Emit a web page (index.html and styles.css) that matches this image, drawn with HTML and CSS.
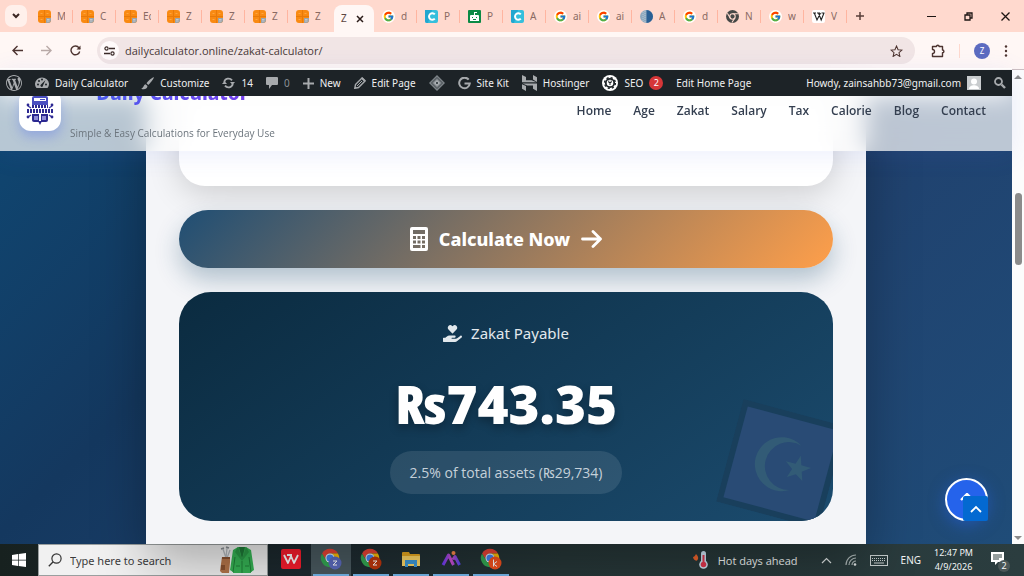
FILE: index.html
```html
<!DOCTYPE html>
<html lang="en">
<head>
    <meta charset="UTF-8">
    <meta name="viewport" content="width=device-width, initial-scale=1.0">
    <title>Zakat Calculator</title>
    <link rel="stylesheet" href="styles.css">
</head>
<body>
    <!-- shared icons -->
    <svg class="sprite" aria-hidden="true">
        <symbol id="i-calc" viewBox="0 0 13 13">
            <rect width="13" height="13" rx="3" fill="#f98a12"/>
            <path d="M8 8h5v2a3 3 0 0 1-3 3H8z" fill="#9ba3ab"/>
            <path d="M6.500 0v13M0 6.500h13" stroke="#e87a0a" stroke-width="1"/>
            <path d="M2.500 3.500h2M8.500 3.500h2M2.500 9.500h2" stroke="#ffa53f" stroke-width="1"/>
            <path d="M9 9.500h2.500M9 11h2.500" stroke="#c3c9ce" stroke-width="1"/>
        </symbol>
        <symbol id="i-google" viewBox="0 0 48 48">
            <circle cx="24" cy="24" r="24" fill="#fff"/>
            <g transform="translate(3 3) scale(.88)">
                <path fill="#FFC107" d="M43.611 20.083H42V20H24v8h11.303c-1.649 4.657-6.080 8-11.303 8-6.627 0-12-5.373-12-12s5.373-12 12-12c3.059 0 5.842 1.154 7.961 3.039l5.657-5.657C34.046 6.053 29.268 4 24 4 12.955 4 4 12.955 4 24s8.955 20 20 20 20-8.955 20-20c0-1.341-.138-2.650-.389-3.917z"/>
                <path fill="#FF3D00" d="M6.306 14.691l6.571 4.819C14.655 15.108 18.961 12 24 12c3.059 0 5.842 1.154 7.961 3.039l5.657-5.657C34.046 6.053 29.268 4 24 4 16.318 4 9.656 8.337 6.306 14.691z"/>
                <path fill="#4CAF50" d="M24 44c5.166 0 9.860-1.977 13.409-5.192l-6.190-5.238C29.211 35.091 26.715 36 24 36c-5.202 0-9.619-3.317-11.283-7.946l-6.522 5.025C9.505 39.556 16.227 44 24 44z"/>
                <path fill="#1976D2" d="M43.611 20.083H42V20H24v8h11.303c-.792 2.237-2.231 4.166-4.087 5.571l6.190 5.238C36.971 39.205 44 34 44 24c0-1.341-.138-2.650-.389-3.917z"/>
            </g>
        </symbol>
        <symbol id="i-cyan" viewBox="0 0 13 13">
            <rect width="13" height="13" rx="2" fill="#35bfdc"/>
            <path d="M0 0l7 0-4 13H2a2 2 0 0 1-2-2z" fill="#22a7d0"/>
            <path d="M9.800 4.300A3.300 3.300 0 1 0 9.800 8.700" fill="none" stroke="#fff" stroke-width="2"/>
        </symbol>
        <symbol id="i-chrome" viewBox="0 0 24 24">
            <path fill="#ea4335" d="M2.470 6.500A11 11 0 0 1 21.530 6.500L12 6.500A5.500 5.500 0 0 0 7.240 14.750Z"/>
            <path fill="#fbbc05" d="M21.530 6.500A11 11 0 0 1 12 23L16.760 14.750A5.500 5.500 0 0 0 12 6.500Z"/>
            <path fill="#34a853" d="M12 23A11 11 0 0 1 2.470 6.500L7.240 14.750A5.500 5.500 0 0 0 16.760 14.750Z"/>
            <circle cx="12" cy="12" r="5.500" fill="#fff"/>
            <circle cx="12" cy="12" r="4.300" fill="#4285f4"/>
        </symbol>
    </svg>

    <div class="tab-strip">
        <button class="tab-menu" aria-label="Search tabs"><svg width="8" height="6" viewBox="0 0 8 6"><path d="M1 1l3 3 3-3" fill="none" stroke="#3b2622" stroke-width="2"/></svg></button>
        <div class="tabs">
            <button class="tab"><svg class="favicon"><use href="#i-calc"/></svg><span>M</span></button>
            <button class="tab"><svg class="favicon"><use href="#i-calc"/></svg><span>C</span></button>
            <button class="tab"><svg class="favicon"><use href="#i-calc"/></svg><span>Ec</span></button>
            <button class="tab"><svg class="favicon"><use href="#i-calc"/></svg><span>Z</span></button>
            <button class="tab"><svg class="favicon"><use href="#i-calc"/></svg><span>Z</span></button>
            <button class="tab"><svg class="favicon"><use href="#i-calc"/></svg><span>Z</span></button>
            <button class="tab last"><svg class="favicon"><use href="#i-calc"/></svg><span>Z</span></button>
            <button class="tab active"><span>Z</span><svg width="8" height="8" viewBox="0 0 8 8"><path d="M1 1l6 6M7 1l-6 6" stroke="#2a1c19" stroke-width="1.500"/></svg></button>
            <button class="tab"><svg class="favicon"><use href="#i-google"/></svg><span>d</span></button>
            <button class="tab"><svg class="favicon"><use href="#i-cyan"/></svg><span>P</span></button>
            <button class="tab"><svg class="favicon" viewBox="0 0 13 13"><rect width="13" height="13" rx="1" fill="#0b8a45"/><path d="M3 5h7a1 1 0 0 1 1 1v5H2V6a1 1 0 0 1 1-1zM6 2h3v1H7v2H6z" fill="#fff"/><path d="M4 7h1v1H4zM8 7h1v1H8zM5 9h3v1H5z" fill="#0b8a45"/></svg><span>P</span></button>
            <button class="tab"><svg class="favicon"><use href="#i-cyan"/></svg><span>A</span></button>
            <button class="tab"><svg class="favicon"><use href="#i-google"/></svg><span>ai</span></button>
            <button class="tab"><svg class="favicon"><use href="#i-google"/></svg><span>ai</span></button>
            <button class="tab"><svg class="favicon" viewBox="0 0 13 13"><circle cx="6.500" cy="6.500" r="6.500" fill="#8fa9bf"/><path d="M6.500 0a6.500 6.500 0 0 1 0 13z" fill="#2a5f94"/><path d="M3 2v9M5 1v11" stroke="#b7c6d3" stroke-dasharray="1 1"/></svg><span>A</span></button>
            <button class="tab"><svg class="favicon"><use href="#i-google"/></svg><span>d</span></button>
            <button class="tab"><svg class="favicon" viewBox="0 0 24 24"><circle cx="12" cy="12" r="12" fill="#454746"/><circle cx="12" cy="12" r="5" fill="none" stroke="#ffd9ce" stroke-width="2"/><path d="M12 7h10M7.700 14.500L2.500 6M16.300 14.500L11 23" stroke="#ffd9ce" stroke-width="2"/></svg><span>N</span></button>
            <button class="tab"><svg class="favicon"><use href="#i-google"/></svg><span>w</span></button>
            <button class="tab"><svg class="favicon" viewBox="0 0 13 13"><rect width="13" height="13" rx="2" fill="#fff"/><path d="M1 3h3M5 3h3M9.500 3h3M2.300 3L5 10l3.500-7M6.500 3l2.700 7L12 3" fill="none" stroke="#222" stroke-width="1.100"/></svg><span>V</span></button>
        </div>
        <button class="new-tab" aria-label="New tab"><svg width="10" height="10" viewBox="0 0 10 10"><path d="M5 1v8M1 5h8" stroke="#5a3f3a" stroke-width="1.500"/></svg></button>
        <div class="window-controls">
            <button aria-label="Minimize"><svg width="9" height="9" viewBox="0 0 9 9"><path d="M0 4.500h9" stroke="#1d1513" stroke-width="1"/></svg></button>
            <button aria-label="Restore"><svg width="9" height="9" viewBox="0 0 9 9"><path d="M1 3h5v5H1zM3 3V1h5v5H6" fill="none" stroke="#1d1513" stroke-width="1.300"/></svg></button>
            <button aria-label="Close"><svg width="9" height="9" viewBox="0 0 9 9"><path d="M.5.5l8 8M8.500.5l-8 8" stroke="#1d1513" stroke-width="1.300"/></svg></button>
        </div>
    </div>

    <div class="toolbar">
        <div class="history">
            <button aria-label="Back"><svg width="11" height="11" viewBox="0 0 11 11"><path d="M11 5.500H1.500M5.500 1L1 5.500 5.500 10" fill="none" stroke="#4d3430" stroke-width="1.400"/></svg></button>
            <button aria-label="Forward"><svg width="11" height="11" viewBox="0 0 11 11"><path d="M0 5.500h9.500M5.500 1L10 5.500 5.500 10" fill="none" stroke="#b9aaa7" stroke-width="1.400"/></svg></button>
            <button aria-label="Reload"><svg width="11" height="11" viewBox="0 0 11 11"><path d="M9.700 6.500A4.400 4.400 0 1 1 9 2.800L10 4" fill="none" stroke="#4d3430" stroke-width="1.400"/><path d="M10.500.5v4h-4z" fill="#4d3430"/></svg></button>
        </div>
        <div class="omnibox">
            <button class="site-info" aria-label="Site information"><svg width="11" height="10" viewBox="0 0 11 10"><path d="M5 2.500h6M0 7.500h6" stroke="#3b2b28" stroke-width="1.300"/><circle cx="2.500" cy="2.500" r="1.600" fill="none" stroke="#3b2b28" stroke-width="1.200"/><circle cx="8.500" cy="7.500" r="1.600" fill="none" stroke="#3b2b28" stroke-width="1.200"/></svg></button>
            <input class="url" type="text" aria-label="Address" value="dailycalculator.online/zakat-calculator/">
            <button aria-label="Bookmark"><svg width="13" height="12" viewBox="0 0 24 23"><path d="M12 2l3 7 7.500.7-5.700 5 1.700 7.300L12 18l-6.500 4 1.700-7.300-5.700-5L9 9z" fill="none" stroke="#4d3430" stroke-width="2"/></svg></button>
        </div>
        <button aria-label="Extensions"><svg width="14" height="14" viewBox="0 0 14 14"><path d="M1.500 2.500H5.500a1.300 1.300 0 0 1 2.600 0H11.500v3.500a1.400 1.400 0 0 1 0 2.800V12.500h-10V9.500a2 2 0 0 0 0-4z" fill="none" stroke="#4d3430" stroke-width="1.400" stroke-linejoin="round"/></svg></button>
        <span class="divider"></span>
        <button class="profile" aria-label="Profile">Z</button>
        <button aria-label="Menu"><svg width="4" height="12" viewBox="0 0 4 12"><g fill="#4d3430"><circle cx="2" cy="1.500" r="1.200"/><circle cx="2" cy="6" r="1.200"/><circle cx="2" cy="10.500" r="1.200"/></g></svg></button>
    </div>

    <div class="viewport">
        <div class="page">
            <nav class="admin-bar" aria-label="Admin">
                <a href="#" aria-label="WordPress"><svg width="16" height="16" viewBox="0 0 20 20"><path d="M20 10c0-5.510-4.490-10-10-10C4.480 0 0 4.490 0 10c0 5.520 4.480 10 10 10 5.510 0 10-4.480 10-10zM7.780 15.370L4.370 6.220c.55-.02 1.170-.08 1.170-.08.5-.06.44-1.130-.06-1.110 0 0-1.450.11-2.370.11-.18 0-.37 0-.58-.01C4.120 2.690 6.870 1.110 10 1.110c2.330 0 4.450.87 6.050 2.340-.68-.11-1.650.39-1.650 1.580 0 .74.45 1.360.9 2.100.35.61.55 1.360.55 2.460 0 1.490-1.400 5-1.400 5l-3.030-8.370c.54-.02.82-.17.82-.17.5-.05.44-1.250-.06-1.220 0 0-1.440.12-2.380.12-.87 0-2.330-.12-2.330-.12-.5-.03-.56 1.200-.06 1.220l.92.08 1.260 3.410zM17.410 10c.24-.64.74-1.870.43-4.250.7 1.290 1.050 2.710 1.050 4.250 0 3.290-1.730 6.240-4.400 7.780.97-2.590 1.940-5.200 2.920-7.780zM6.100 18.090C3.120 16.650 1.110 13.530 1.110 10c0-1.300.23-2.480.72-3.590C3.250 10.300 4.670 14.200 6.100 18.090zm4.030-6.630l2.580 6.980c-.86.29-1.760.45-2.710.45-.79 0-1.570-.11-2.290-.33.81-2.380 1.620-4.740 2.420-7.100z"/></svg></a>
                <a href="#"><svg width="14" height="12" viewBox="0 0 14 12"><path d="M1.500 11A7 6.500 0 1 1 12.500 11z"/><g fill="#1d2327"><circle cx="3" cy="7.500" r="1"/><circle cx="4" cy="4" r="1"/><circle cx="7" cy="2.500" r="1"/><circle cx="11" cy="7.500" r="1"/><path d="M10.500 3L8 8.500A1.300 1.300 0 1 1 6 7.500z"/></g></svg>Daily Calculator</a>
                <a href="#"><svg width="13" height="13" viewBox="0 0 13 13"><path d="M12.800.3c-.8-.7-6 4-7.300 6l1.800 1.700C9 6.500 13.500 1 12.800.3zM4.600 7.200c-1.800.2-1.600 3-4.400 4.500 2.500 1.200 6 .7 6.300-2.700z"/></svg>Customize</a>
                <a href="#"><svg width="13" height="12" viewBox="0 0 13 12"><path d="M2.200 5A4.400 4.400 0 0 1 10 3.400M10.800 7A4.400 4.400 0 0 1 3 8.600" fill="none" stroke="#a7aaad" stroke-width="1.800"/><path d="M8 5h5l-2.500 3zM0 7h5L2.500 4z"/></svg>14</a>
                <a href="#" class="muted"><svg width="12" height="12" viewBox="0 0 12 12"><path d="M1 0h10a1 1 0 0 1 1 1v6a1 1 0 0 1-1 1H6l-3 4V8H1a1 1 0 0 1-1-1V1a1 1 0 0 1 1-1z"/></svg>0</a>
                <a href="#"><svg width="11" height="11" viewBox="0 0 11 11"><path d="M4.500 0h2v4.500H11v2H6.500V11h-2V6.500H0v-2h4.500z"/></svg>New</a>
                <a href="#"><svg width="12" height="12" viewBox="0 0 12 12"><path d="M1.500 7.500L8 1l3 3-6.500 6.500L.8 11.300z" fill="none" stroke="#a7aaad" stroke-width="1.400"/><path d="M7 1.500L8.500.2l3.300 3.300L10.500 5z"/><path d="M3 9l5-5" stroke="#a7aaad"/></svg>Edit Page</a>
                <a href="#" aria-label="Plugins"><svg width="16" height="16" viewBox="0 0 16 16"><path d="M8 0l8 8-8 8-8-8z" fill="#7d8388"/><path d="M8 2.500l5.500 5.500L8 13.500 2.500 8z" fill="none" stroke="#40474c" stroke-width="1"/><path d="M8 5l3 3-3 3-3-3z" fill="#b3b8bb"/><circle cx="8" cy="8" r="1.200" fill="#40474c"/></svg></a>
                <a href="#"><svg width="13" height="13" viewBox="0 0 13 13"><path d="M10.700 2.700A5.300 5.300 0 1 0 11.800 6.500H6.500" fill="none" stroke="#a7aaad" stroke-width="2"/></svg>Site Kit</a>
                <a href="#"><svg width="15" height="16" viewBox="0 0 15 16"><path d="M0 7.300V0l4 2.100v3.200h5.600l5 2zM11 4.600V0l4 2.200v4.900zM11 13.800v-3.200H5.200L.5 8.500H15V16zM0 9.300l4 1.800V16l-4-2.200z"/></svg>Hostinger</a>
                <a href="#"><svg width="16" height="16" viewBox="0 0 16 16"><circle cx="8" cy="8" r="8" fill="#fff"/><circle cx="8" cy="8" r="4.200" fill="#fff" stroke="#1d2327" stroke-width="1.800"/><circle cx="8" cy="8" r="5.400" fill="none" stroke="#1d2327" stroke-width="1.400" stroke-dasharray="2.120 2.120"/><path d="M6.800 5.500v2h2.400v-2M8 7.500V10" fill="none" stroke="#1d2327" stroke-width="1"/></svg>SEO<span class="count">2</span></a>
                <a href="#">Edit Home Page</a>
                <a href="#" class="account">Howdy, zainsahbb73@gmail.com<svg width="14" height="14" viewBox="0 0 14 14"><rect width="14" height="14" fill="#c9ccce"/><circle cx="7" cy="5.500" r="3" fill="#fff"/><path d="M2 13c0-5 10-5 10 0z" fill="#fff"/></svg></a>
                <a href="#" aria-label="Search"><svg width="12" height="12" viewBox="0 0 12 12"><circle cx="4.500" cy="4.500" r="3.500" fill="none" stroke="#a7aaad" stroke-width="1.800"/><path d="M7.500 7.500l3.500 3.500" stroke="#a7aaad" stroke-width="2.400"/></svg></a>
            </nav>

            <div class="site">
                <header class="site-header">
                    <div class="brand">
                        <span class="logo"><svg width="28" height="30" viewBox="0 0 28 30">
                            <path d="M6 3a2 2 0 0 1 2-2h12a2 2 0 0 1 2 2v7H6z" fill="#4a4fc0"/>
                            <path d="M8 3h12v3H8z" fill="#fff"/>
                            <path d="M14 4.500h5" stroke="#4a4fc0"/>
                            <path d="M6 11.500h16" stroke="#2c2891" stroke-width="3" stroke-dasharray="2 1"/>
                            <path d="M1 16h26" stroke="#2c2891" stroke-width="4" stroke-dasharray="2 1"/>
                            <path d="M6 19h16v6a2 2 0 0 1-2 2H8a2 2 0 0 1-2-2z" fill="#2c2891"/>
                            <path d="M8 21h4v4H8zM16 21h4v4h-4z" fill="#8f8cd6"/>
                            <path d="M13 19h2v9h-2z" fill="#fff"/>
                            <path d="M2 11l3 2M26 11l-3 2M2 22l3-2M26 22l-3-2" stroke="#3b35a5" stroke-width="1.400"/>
                            <g fill="#2c2891"><circle cx="2" cy="10" r="1.400"/><circle cx="26" cy="10" r="1.400"/><circle cx="2" cy="22" r="1.400"/><circle cx="26" cy="22" r="1.400"/><path d="M12 26h4l-2 4z"/></g>
                        </svg></span>
                        <div class="brand-text">
                            <div class="brand-name">Daily Calculator</div>
                            <div class="tagline">Simple &amp; Easy Calculations for Everyday Use</div>
                        </div>
                    </div>
                    <nav class="site-nav">
                        <a href="#">Home</a>
                        <a href="#">Age</a>
                        <a href="#">Zakat</a>
                        <a href="#">Salary</a>
                        <a href="#">Tax</a>
                        <a href="#">Calorie</a>
                        <a href="#">Blog</a>
                        <a href="#">Contact</a>
                    </nav>
                </header>

                <main class="container">
                    <section class="form-card"></section>

                    <button class="calculate-btn">
                        <svg width="18" height="24" viewBox="0 0 18 24"><path fill="#fff" fill-rule="evenodd" d="M2 0h14a2 2 0 0 1 2 2v20a2 2 0 0 1-2 2H2a2 2 0 0 1-2-2V2a2 2 0 0 1 2-2zM3 3v4h12V3zM3 9v3h3V9zM7.500 9v3h3V9zM12 9v3h3V9zM3 13.500v3h3v-3zM7.500 13.500v3h3v-3zM12 13.500v3h3v-3zM3 18v3h7.500v-3zM12 18v3h3v-3z"/></svg>
                        Calculate Now
                        <svg width="21" height="18" viewBox="0 0 21 18"><path d="M1.500 9h18M12 1.500L19.500 9 12 16.500" fill="none" stroke="#fff" stroke-width="2.800" stroke-linecap="round" stroke-linejoin="round"/></svg>
                    </button>

                    <section class="result-card">
                        <div class="result-label">
                            <svg width="19" height="17" viewBox="0 0 576 512"><path fill="currentColor" d="M275.300 250.500c7 7.400 18.400 7.400 25.500 0l108.900-114.200c31.600-33.200 29.800-88.200-5.600-118.800-30.800-26.700-76.700-21.900-104.900 7.700L288 36.900l-11.100-11.600C248.700-4.400 202.800-9.200 172 17.500c-35.300 30.600-37.200 85.600-5.600 118.800l108.900 114.200zm290 77.600c-11.800-10.700-30.200-10-42.600 0L430.300 402c-11.300 9.100-25.400 14-40 14H272c-8.800 0-16-7.200-16-16s7.200-16 16-16h78.300c15.900 0 30.700-10.900 33.300-26.600 3.300-20-12.100-37.400-31.600-37.400H192c-27 0-53.100 9.300-74.100 26.300L71.400 384H16c-8.800 0-16 7.200-16 16v96c0 8.800 7.200 16 16 16h356.800c14.500 0 28.600-4.900 40-14L564 377c15.200-12.100 16.400-35.300 1.300-48.900z"/></svg>
                            Zakat Payable
                        </div>
                        <div class="result-amount">₨743.35</div>
                        <div class="result-note">2.5% of total assets (₨29,734)</div>
                        <svg class="emblem" width="106" height="106" viewBox="-53 -53 106 106">
                            <rect x="-53" y="-53" width="106" height="106" fill="#193f5c"/>
                            <rect x="-47" y="-47" width="94" height="94" fill="#294b75"/>
                            <path d="M15-23A27 27 0 1 0 15 23A24 24 0 1 1 15-23z" fill="#325b76"/>
                            <path d="M17-13l3 9h10l-8 6 3 9-8-5-8 5 3-9-8-6h10z" fill="#325b76"/>
                        </svg>
                    </section>
                </main>

                <button class="back-top" aria-label="Back to top"><svg width="14" height="14" viewBox="0 0 14 14"><path d="M7 1v13M1 7l6-6 6 6" fill="none" stroke="#fff" stroke-width="2.400"/></svg></button>
                <button class="scroll-up" aria-label="Scroll up"><svg width="12" height="8" viewBox="0 0 12 8"><path d="M1 7l5-5 5 5" fill="none" stroke="#fff" stroke-width="1.800"/></svg></button>
            </div>
        </div>
        <div class="scrollbar">
            <span class="arrow up"></span>
            <span class="thumb"></span>
            <span class="arrow down"></span>
        </div>
    </div>

    <footer class="taskbar">
        <button class="start" aria-label="Start"><svg width="14" height="14" viewBox="0 0 14 14"><path d="M0 2l6-1v5.700H0zM6.700.9L14 0v6.700H6.700zM0 7.400h6V13l-6-1zM6.700 7.400H14V14l-7.300-1z" fill="#fff"/></svg></button>
        <label class="search">
            <svg width="14" height="14" viewBox="0 0 14 14"><circle cx="8.500" cy="5.500" r="4.600" fill="none" stroke="#333" stroke-width="1.200"/><path d="M5.200 8.800L.8 13.200" stroke="#333" stroke-width="1.300"/></svg>
            <input type="text" placeholder="Type here to search" aria-label="Search">
            <svg width="36" height="28" viewBox="0 0 36 28">
                <path d="M4 3l3 9M8 2l-1 10M11 4L8 12" stroke="#b4b9be" stroke-width="1.300"/>
                <path d="M2 3l3-1M7 1l3 1" stroke="#8a8f94" stroke-width="1.600"/>
                <path d="M3 11h8v5l-1 11H3L1 25z" fill="#b5754a"/><path d="M3 11h8v2H3zM2 19h4v5H2z" fill="#8a5230"/>
                <path d="M19 1h8l5 3 3 20-3 2v1H14v-1l-3-2 3-20z" fill="#36b455"/>
                <path d="M20 1h6l-3 12z" fill="#1f7a38"/>
                <path d="M19 1l-3 5 7 9 7-9-3-5-4 12z" fill="#2b9a47"/>
                <path d="M23 15v12M16 11l-2 15M30 11l2 15" stroke="#1f8038"/>
                <path d="M17 20h4M26 20h4" stroke="#1f8038"/>
            </svg>
        </label>
        <div class="apps">
            <button aria-label="WPS Office"><svg width="20" height="20" viewBox="0 0 20 20"><rect width="20" height="20" rx="2" fill="#fb1d2d"/><path d="M3 6l4 8 3-7 3 7 4-8M6 6h5" fill="none" stroke="#fff" stroke-width="1.800" stroke-linejoin="round"/></svg></button>
            <button class="open current" aria-label="Chrome"><svg width="22" height="22" viewBox="0 0 22 22"><use href="#i-chrome" width="20" height="20"/><circle cx="15" cy="15" r="6.500" fill="#5c6bc0"/><path d="M13 13h4l-4 4h4" fill="none" stroke="#fff"/></svg></button>
            <button class="open" aria-label="Chrome"><svg width="22" height="22" viewBox="0 0 22 22"><use href="#i-chrome" width="20" height="20"/><circle cx="15" cy="15" r="6.500" fill="#bf360c"/><path d="M13 13h4l-4 4h4" fill="none" stroke="#fff"/></svg></button>
            <button class="open" aria-label="File Explorer"><svg width="18" height="15" viewBox="0 0 18 15"><path d="M1 0h6l1 2h9a1 1 0 0 1 1 1v11H0V1a1 1 0 0 1 1-1z" fill="#e8a820"/><path d="M0 4h18v10H0z" fill="#ffd766"/><path d="M3 8h12v7h-3v-3H6v3H3z" fill="#3f9ad9"/></svg></button>
            <button class="open" aria-label="Editor"><svg width="20" height="16" viewBox="0 0 20 16"><defs><linearGradient id="peak" x2="1" y2="0"><stop offset="0" stop-color="#6a3df5"/><stop offset=".5" stop-color="#d24fd0"/><stop offset="1" stop-color="#5a48f0"/></linearGradient></defs><path d="M2 14L7.500 4l5 10M12 8.500l2-3 4.500 8.500" fill="none" stroke="url(#peak)" stroke-width="3" stroke-linejoin="round"/><circle cx="12.500" cy="2" r="2" fill="#ff8a4c"/></svg></button>
            <button class="open" aria-label="Chrome"><svg width="22" height="22" viewBox="0 0 22 22"><use href="#i-chrome" width="20" height="20"/><circle cx="15" cy="15" r="6.500" fill="#f4511e"/><path d="M13.500 11.500v7M17 13.500l-3.500 2.500 3.500 2.500" fill="none" stroke="#fff"/></svg></button>
        </div>
        <div class="tray">
            <button class="weather"><svg width="16" height="20" viewBox="0 0 16 20"><path d="M3 4c2 2 3 4 1.500 6S0 9 0 7c1 0 2-1 3-3z" fill="#f0642d"/><rect x="8" y="1" width="5" height="13" rx="2.500" fill="#cfe3f3"/><circle cx="10.500" cy="14.500" r="4.300" fill="#cfe3f3"/><circle cx="10.500" cy="14.500" r="2.800" fill="#e0364f"/><path d="M10.500 5v9" stroke="#e0364f" stroke-width="2"/></svg>Hot days ahead</button>
            <button aria-label="Hidden icons"><svg width="11" height="7" viewBox="0 0 11 7"><path d="M1 6l4.500-4.500L10 6" fill="none" stroke="#dfe4e4" stroke-width="1.200"/></svg></button>
            <button aria-label="Network"><svg width="12" height="12" viewBox="0 0 12 12"><path d="M1 11A10 10 0 0 1 11 1M4 11a7 7 0 0 1 7-7M7 11a4 4 0 0 1 4-4" fill="none" stroke="#aab4b4" stroke-width="1.200"/><circle cx="10" cy="10.500" r="1.300" fill="#dfe4e4"/></svg></button>
            <button aria-label="Keyboard"><svg width="18" height="11" viewBox="0 0 18 11"><rect x=".5" y=".5" width="17" height="10" fill="none" stroke="#c5cccc"/><path d="M2 3.500h14M2 5.500h14" stroke="#c5cccc" stroke-dasharray="1 1"/><path d="M4 8h10" stroke="#c5cccc"/></svg></button>
            <button>ENG</button>
            <button class="clock"><span>12:47 PM</span><span>4/9/2026</span></button>
            <button class="notice" aria-label="Notifications"><svg width="20" height="20" viewBox="0 0 20 20"><path d="M1 2h13v10H8l-3 3v-3H1z" fill="#fff"/><path d="M3 5h9M3 7h9M3 9h6" stroke="#2b3c3d"/></svg><span>2</span></button>
        </div>
    </footer>
</body>
</html>
```
FILE: styles.css
```css
* {
    box-sizing: border-box;
}
body {
    margin: 0;
    height: 100vh;
    display: flex;
    flex-direction: column;
    overflow: hidden;
    font-family: "Noto Sans", "Open Sans", sans-serif;
    font-size: 11px;
}
button, input {
    font: inherit;
    color: inherit;
    border: none;
    background: none;
    padding: 0;
    margin: 0;
}
button {
    display: flex;
    align-items: center;
    justify-content: center;
    flex: none;
    white-space: nowrap;
}
a {
    color: inherit;
    text-decoration: none;
}
svg {
    display: block;
    flex: none;
}
.sprite {
    position: absolute;
    width: 0;
    height: 0;
}

/* browser tabs */
.tab-strip {
    flex: none;
    height: 32px;
    display: flex;
    align-items: center;
    background-color: #ffd9ce;
    padding-left: 5px;
}
.tab-menu {
    width: 22px;
    height: 22px;
    border-radius: 7px;
    background-color: #fff0eb;
    margin-right: 3px;
}
.tabs {
    display: flex;
    align-self: stretch;
    align-items: center;
}
.tab {
    width: 43px;
    height: 13px;
    padding-left: 8px;
    gap: 6px;
    justify-content: flex-start;
    border-right: 1px solid #ffb5a0;
    color: #8a6a63;
    font-size: 10px;
    line-height: 13px;
}
.tab span {
    width: 8px;
    overflow: hidden;
    text-align: left;
}
.tab.last {
    border-color: transparent;
}
.tab.active {
    width: 40px;
    height: 27px;
    margin-left: 3px;
    align-self: flex-end;
    border: none;
    border-radius: 8px 8px 0 0;
    background-color: #fff7f5;
    color: #5d4640;
    padding-left: 7px;
    gap: 7px;
}
.favicon {
    width: 13px;
    height: 13px;
}
.new-tab {
    width: 26px;
    height: 26px;
}
.window-controls {
    margin-left: auto;
    display: flex;
}
.window-controls button {
    width: 37px;
    height: 32px;
}

/* address bar row */
.toolbar {
    flex: none;
    height: 38px;
    display: flex;
    align-items: center;
    gap: 14px;
    padding: 0 16px 0 12px;
    background-color: #fff7f5;
    border-bottom: 1px solid #cdbfc2;
}
.history {
    display: flex;
    gap: 18px;
}
.omnibox {
    flex: 1;
    height: 27px;
    display: flex;
    align-items: center;
    gap: 6px;
    padding: 0 12px 0 3px;
    margin: 0 2px;
    border-radius: 14px;
    background-color: #f1e5e5;
}
.site-info {
    width: 19px;
    height: 19px;
    border-radius: 50%;
    background-color: #fffafa;
}
.url {
    flex: 1;
    min-width: 0;
    color: #4a3a38;
    font-family: "Open Sans", "Noto Sans", sans-serif;
}
.divider {
    width: 1px;
    height: 14px;
    background-color: #ffd9ce;
}
.profile {
    width: 16px;
    height: 16px;
    border-radius: 50%;
    background-color: #5c6bc0;
    color: #fff;
    font-size: 8px;
}

/* web page */
.viewport {
    flex: 1;
    min-height: 0;
    display: flex;
}
.page {
    flex: 1;
    min-width: 0;
    display: flex;
    flex-direction: column;
}
.admin-bar {
    flex: none;
    height: 26px;
    position: relative;
    z-index: 3;
    display: flex;
    align-items: center;
    gap: 13px;
    padding: 0 6px;
    background-color: #1d2327;
    color: #f0f0f1;
    font-size: 10px;
}
.admin-bar a {
    display: flex;
    align-items: center;
    gap: 6px;
    white-space: nowrap;
}
.admin-bar svg {
    fill: #a7aaad;
}
.admin-bar .muted {
    color: #8c9196;
}
.admin-bar .account {
    margin-left: auto;
}
.count {
    width: 14px;
    height: 14px;
    border-radius: 50%;
    background-color: #d63638;
    color: #fff;
    font-size: 9px;
    line-height: 14px;
    text-align: center;
}
.site {
    flex: 1;
    min-height: 0;
    position: relative;
    background: linear-gradient(135deg, #0f4772 0%, #14385f 30%, #20426f 65%, #1f4c78 100%);
}
.site-header {
    position: absolute;
    top: -28px;
    left: 0;
    right: 0;
    z-index: 2;
    height: 83px;
    display: flex;
    align-items: center;
    justify-content: space-between;
    padding: 0 26px 0 19px;
    background-color: rgba(255, 255, 255, 0.7);
    backdrop-filter: blur(12px);
    box-shadow: 0 4px 24px rgba(67, 97, 238, 0.1);
}
.brand {
    display: flex;
    align-items: center;
    gap: 9px;
}
.logo {
    width: 42px;
    height: 42px;
    display: flex;
    align-items: center;
    justify-content: center;
    border-radius: 12px;
    background-color: #fff;
    box-shadow: 0 6px 12px rgba(67, 97, 238, 0.3);
}
.brand-text {
    text-align: center;
}
.brand-name {
    font-size: 19px;
    font-weight: 800;
    line-height: 26px;
    background: linear-gradient(90deg, #4361ee, #7c3aed);
    background-clip: text;
    -webkit-background-clip: text;
    color: transparent;
}
.tagline {
    margin-top: 20px;
    font-size: 10px;
    line-height: 14px;
    font-family: "Open Sans", "Noto Sans", sans-serif;
    color: #6c757d;
}
.site-nav {
    display: flex;
    gap: 22px;
    padding-top: 2px;
    font-family: "Open Sans", "Noto Sans", sans-serif;
    font-size: 12px;
    font-weight: 600;
    color: #343f50;
}
.container {
    max-width: 720px;
    height: 100%;
    margin: 0 auto;
    padding: 0 33px;
    display: flex;
    flex-direction: column;
    gap: 24px;
    overflow: hidden;
    background-color: #f4f5f8;
    box-shadow: 0 20px 50px rgba(0, 0, 0, 0.3);
}
.form-card {
    flex: none;
    height: 90px;
    border-radius: 0 0 26px 26px;
    background-color: #fff;
    box-shadow: 0 8px 32px rgba(0, 0, 0, 0.16);
}
.calculate-btn {
    position: relative;
    padding: 15px;
    gap: 11px;
    border-radius: 29px;
    background: linear-gradient(135deg, #1f4e74, #ff9f4a);
    box-shadow: 0 12px 24px rgba(27, 77, 110, 0.3);
    color: #fff;
    font-size: 18px;
    font-weight: 800;
    line-height: 28px;
}
.result-card {
    position: relative;
    flex: none;
    display: flex;
    flex-direction: column;
    align-items: center;
    padding: 29px 24px 27px;
    border-radius: 32px;
    overflow: hidden;
    background: linear-gradient(145deg, #0b2b40, #1b4b6e);
    color: #fff;
}
.result-label {
    display: flex;
    align-items: center;
    gap: 9px;
    font-size: 15px;
    line-height: 24px;
    color: #e2e8ec;
}
.result-amount {
    margin: 24px 0 13px;
    font-size: 53px;
    font-weight: 900;
    line-height: 69px;
    text-shadow: 0 4px 10px rgba(0, 0, 0, 0.3);
}
.result-note {
    padding: 10px 20px;
    border-radius: 22px;
    background-color: rgba(255, 255, 255, 0.1);
    color: #c5d0d9;
    font-family: "Open Sans", "Noto Sans", sans-serif;
    font-size: 14px;
    line-height: 23px;
}
.emblem {
    position: absolute;
    right: -1px;
    bottom: 4px;
    transform: rotate(15deg);
}
.back-top {
    position: absolute;
    right: 24px;
    bottom: 23px;
    width: 43px;
    height: 43px;
    border: 2px solid #fff;
    border-radius: 50%;
    background-color: #2563eb;
    box-shadow: 0 4px 16px rgba(37, 99, 235, 0.5);
}
.scroll-up {
    position: absolute;
    right: 24px;
    bottom: 23px;
    width: 25px;
    height: 25px;
    border-radius: 2px;
    background-color: #0369d1;
}
.scrollbar {
    width: 12px;
    display: flex;
    flex-direction: column;
    align-items: center;
    padding: 5px 0 4px;
    background-color: #fcfcfc;
}
.arrow {
    border: 4px solid transparent;
}
.arrow.up {
    border-top: none;
    border-bottom-color: #8b8b8b;
}
.arrow.down {
    margin-top: auto;
    border-bottom: none;
    border-top-color: #8b8b8b;
}
.thumb {
    width: 7px;
    height: 72px;
    margin-top: 114px;
    border-radius: 4px;
    background-color: #8b8b8b;
}

/* taskbar */
.taskbar {
    flex: none;
    height: 32px;
    display: flex;
    background: linear-gradient(90deg, #17211f, #1d2a30 30%, #263637 55%, #2b3d3f);
    color: #f2f5f5;
    font-size: 11px;
}
.start {
    width: 38px;
}
.search {
    width: 230px;
    display: flex;
    align-items: center;
    gap: 8px;
    padding: 0 12px 0 9px;
    background-color: #f1f1f1;
    border: 1px solid #9a9f9f;
}
.search input {
    flex: 1;
    min-width: 0;
    color: #3c3c3c;
}
.search input::placeholder {
    color: #3c3c3c;
    opacity: 1;
}
.apps {
    display: flex;
    margin-left: 3px;
}
.apps button {
    width: 40px;
    border-bottom: 2px solid transparent;
}
.apps .open {
    border-image: linear-gradient(90deg, transparent 10%, #76b9ed 10%, #76b9ed 90%, transparent 90%) 2;
    border-width: 0 0 2px;
    border-style: solid;
}
.apps .current {
    background-color: #4a5a60;
}
.tray {
    margin-left: auto;
    display: flex;
    align-items: center;
    gap: 13px;
    padding-right: 14px;
    font-size: 10px;
}
.weather {
    gap: 9px;
    margin-right: 10px;
    font-family: "Open Sans", "Noto Sans", sans-serif;
    font-size: 11px;
}
.clock {
    flex-direction: column;
    font-size: 9px;
    line-height: 14px;
}
.notice {
    position: relative;
    margin-left: 4px;
}
.notice span {
    position: absolute;
    right: 0;
    bottom: -2px;
    width: 12px;
    height: 12px;
    border-radius: 50%;
    background-color: #4a5657;
    font-size: 9px;
    line-height: 12px;
}
```
